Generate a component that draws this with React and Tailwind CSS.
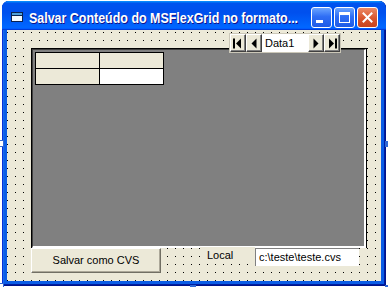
import React from "react";

function NavGlyph({ type }) {
  return (
    <svg width="12" height="11" viewBox="0 0 12 11" className="block">
      {type === "first" && (
        <g fill="#000">
          <rect x="1" y="0.5" width="2" height="10" />
          <polygon points="9,0.5 9,10.5 4,5.5" />
        </g>
      )}
      {type === "prev" && (
        <g fill="#000">
          <polygon points="8.5,0.5 8.5,10.5 3.5,5.5" />
        </g>
      )}
      {type === "next" && (
        <g fill="#000">
          <polygon points="3.5,0.5 3.5,10.5 8.5,5.5" />
        </g>
      )}
      {type === "last" && (
        <g fill="#000">
          <polygon points="3,0.5 3,10.5 8,5.5" />
          <rect x="9" y="0.5" width="2" height="10" />
        </g>
      )}
    </svg>
  );
}

function NavButton({ type }) {
  return (
    <div className="w-[16px] h-full flex items-center justify-center bg-[#ece9d8] border border-t-white border-l-white border-r-[#404040] border-b-[#404040] shadow-[inset_-1px_-1px_#808080]">
      <NavGlyph type={type} />
    </div>
  );
}

export default function App() {
  const font = { fontFamily: '"Liberation Sans", Arial, sans-serif' };
  return (
    <div className="relative w-[388px] h-[287px] bg-white overflow-hidden" style={font}>
      {/* Window */}
      <div className="ml-[2px] mt-[1px] w-[384px] h-[285px] flex flex-col rounded-t-[7px] bg-[#0b5de6] shadow-[inset_1px_0_#0831d9,inset_-1px_0_#00138c,inset_0_-1px_#00138c,inset_2px_0_#166aee,inset_-2px_0_#001ea0,inset_0_-2px_#001ea0]">
        {/* Title bar */}
        <div className="h-[29px] flex items-start rounded-t-[7px] bg-[linear-gradient(180deg,#0997ff,#0053ee_8%,#0050ee_40%,#0066ff_88%,#0066ff_93%,#005bff_95%,#003dd7_96%,#003dd7)] pl-[9px] pr-[8px]">
          <div className="mt-[11px] shrink-0">
            <svg width="12" height="10" viewBox="0 0 12 10" className="block">
              <rect x="0.5" y="0.5" width="11" height="9" fill="#f4fbff" stroke="#0a2250" />
              <rect x="1" y="1" width="10" height="2" fill="#4fa0d8" />
              <line x1="1" y1="3.5" x2="11" y2="3.5" stroke="#0a2250" />
            </svg>
          </div>
          <div className="ml-[6px] mt-[5px] w-[277px] shrink-0 overflow-visible whitespace-nowrap">
            <span className="inline-block origin-left scale-x-[0.83] text-white font-bold text-[15px] leading-[19px] [text-shadow:1px_1px_#0f1089]">
              Salvar Conteúdo do MSFlexGrid no formato...
            </span>
          </div>
          <div className="ml-auto mt-[6px] flex gap-[2px] shrink-0">
            {/* minimize */}
            <div className="w-[21px] h-[21px] rounded-[3px] border border-white bg-[linear-gradient(180deg,#6aa5ff,#2f6ef5_45%,#1f5be6)] flex items-end pl-[4px] pb-[4px]">
              <div className="w-[7px] h-[3px] bg-white" />
            </div>
            {/* maximize */}
            <div className="w-[21px] h-[21px] rounded-[3px] border border-white bg-[linear-gradient(180deg,#6aa5ff,#2f6ef5_45%,#1f5be6)] flex items-center justify-center">
              <div className="w-[11px] h-[11px] border border-white border-t-[3px]" />
            </div>
            {/* close */}
            <div className="w-[21px] h-[21px] rounded-[3px] border border-white bg-[linear-gradient(180deg,#ec8a66,#d9552e_55%,#c8431f)] flex items-center justify-center">
              <svg width="11" height="11" viewBox="0 0 11 11" className="block">
                <path d="M1.5 1.5 L9.5 9.5 M9.5 1.5 L1.5 9.5" stroke="#fff" strokeWidth="2" strokeLinecap="square" />
              </svg>
            </div>
          </div>
        </div>

        {/* Client */}
        <div className="flex-1 px-[5px] pb-[5px]">
          <div className="relative h-full bg-[#ece9d8] bg-[image:conic-gradient(at_1px_1px,transparent_270deg,#000_0)] bg-size-[8px_8px] bg-position-[0px_2px] pl-[24px] pt-[18px] flex flex-col">
            {/* FlexGrid */}
            <div className="w-[336px] h-[200px] border-l border-t border-r border-black">
              <div className="h-full bg-[#808080] border-l border-t border-[#404040] border-r-2 border-b-2 border-r-white border-b-white pl-[2px] pt-[2px]">
                <div className="grid grid-cols-[63px_63px] grid-rows-[15px_15px] gap-px p-px bg-black w-fit">
                  <div className="bg-[#ece9d8]" />
                  <div className="bg-[#ece9d8]" />
                  <div className="bg-[#ece9d8]" />
                  <div className="bg-white" />
                </div>
              </div>
            </div>

            {/* Bottom row */}
            <div className="flex items-start">
              <div className="w-[130px] h-[25px] flex items-center justify-center bg-[#ece9d8] border border-t-white border-l-white border-r-[#716f64] border-b-[#716f64] shadow-[inset_-1px_-1px_#aca899] text-[11px] text-black">
                Salvar como CVS
              </div>
              <div className="ml-[39px] mt-[-1px] w-[55px] h-[16px] bg-[#ece9d8] pl-[7px] text-[11px] leading-[15px] text-black pt-[1px]">
                Local
              </div>
              <div className="w-[104px] h-[18px] bg-white border-l border-t border-[#808080] text-[11px] leading-[16px] text-black pl-[3px]">
                c:\teste\teste.cvs
              </div>
            </div>

            {/* Data control (overlay) */}
            <div className="absolute left-[222px] top-[3px] w-[112px] h-[20px] flex border border-[#cbc7b8] bg-[#ece9d8]">
              <NavButton type="first" />
              <NavButton type="prev" />
              <div className="flex-1 bg-white flex items-center pl-[3px] text-[11px] text-black">Data1</div>
              <NavButton type="next" />
              <NavButton type="last" />
            </div>
          </div>
        </div>
      </div>

      {/* Selection handles */}
      <div className="absolute left-[-3px] top-[140px] w-[7px] h-[7px] border border-[#3168d5] bg-white" />
      <div className="absolute left-[-3px] top-[283px] w-[7px] h-[7px] border border-[#3168d5] bg-white" />
      <div className="absolute left-[190px] top-[285px] w-[6px] h-[6px] bg-[#3168d5]" />
      <div className="absolute left-[385px] top-[141px] w-[6px] h-[6px] bg-[#3168d5]" />
      <div className="absolute left-[385px] top-[285px] w-[6px] h-[6px] bg-[#3168d5]" />
    </div>
  );
}
